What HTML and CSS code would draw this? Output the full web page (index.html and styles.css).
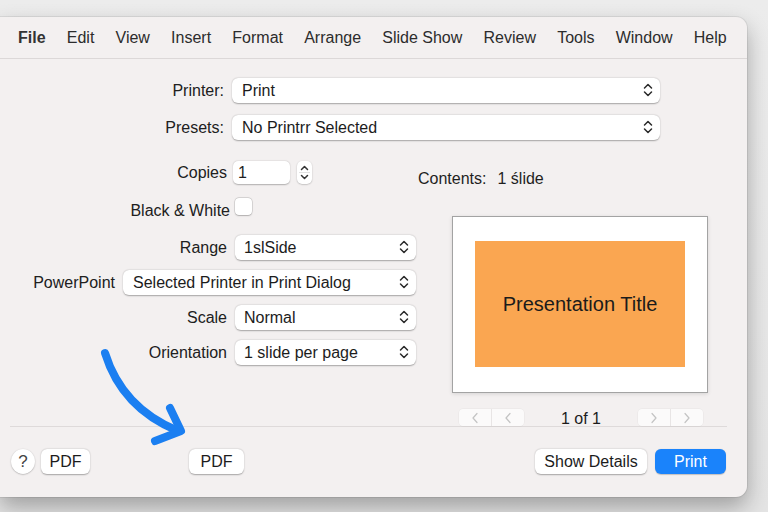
FILE: index.html
```html
<!DOCTYPE html>
<html>
<head>
<meta charset="utf-8">
<link rel="stylesheet" href="styles.css">
</head>
<body>
<div class="desk">
  <div class="win">
    <nav class="menubar">
      <span class="menu bold">File</span>
      <span class="menu">Edit</span>
      <span class="menu">View</span>
      <span class="menu">Insert</span>
      <span class="menu">Format</span>
      <span class="menu">Arrange</span>
      <span class="menu">Slide Show</span>
      <span class="menu">Review</span>
      <span class="menu">Tools</span>
      <span class="menu">Window</span>
      <span class="menu">Help</span>
    </nav>
    <div class="content">
      <div class="row">
        <span class="lbl lbl-top">Printer:</span>
        <div class="select wide">Print
          <svg class="chev" viewBox="0 0 10 16"><path d="M1.5 6 L5 2.5 L8.5 6 M1.5 10 L5 13.5 L8.5 10"/></svg>
        </div>
      </div>
      <div class="row presets">
        <span class="lbl lbl-top">Presets:</span>
        <div class="select wide">No Printrr Selected
          <svg class="chev" viewBox="0 0 10 16"><path d="M1.5 6 L5 2.5 L8.5 6 M1.5 10 L5 13.5 L8.5 10"/></svg>
        </div>
      </div>
      <div class="split">
        <div class="form">
          <div class="row">
            <span class="lbl">Copies</span>
            <div class="field">1</div>
            <div class="stepper">
              <svg viewBox="0 0 15 23"><path class="st" d="M4.5 8.5 L7.5 5.5 L10.5 8.5 M4.5 14.5 L7.5 17.5 L10.5 14.5"/><path class="stl" d="M2 11.5 H13"/></svg>
            </div>
          </div>
          <div class="row bw">
            <span class="lbl lbl-bw">Black &amp; White</span>
            <div class="check"></div>
          </div>
          <div class="row range">
            <span class="lbl">Range</span>
            <div class="select short">1slSide
              <svg class="chev" viewBox="0 0 10 16"><path d="M1.5 6 L5 2.5 L8.5 6 M1.5 10 L5 13.5 L8.5 10"/></svg>
            </div>
          </div>
          <div class="row">
            <span class="lbl lbl-pp">PowerPoint</span>
            <div class="select pp">Selected Printer in Print Dialog
              <svg class="chev" viewBox="0 0 10 16"><path d="M1.5 6 L5 2.5 L8.5 6 M1.5 10 L5 13.5 L8.5 10"/></svg>
            </div>
          </div>
          <div class="row">
            <span class="lbl">Scale</span>
            <div class="select short">Normal
              <svg class="chev" viewBox="0 0 10 16"><path d="M1.5 6 L5 2.5 L8.5 6 M1.5 10 L5 13.5 L8.5 10"/></svg>
            </div>
          </div>
          <div class="row">
            <span class="lbl">Orientation</span>
            <div class="select short">1 slide per page
              <svg class="chev" viewBox="0 0 10 16"><path d="M1.5 6 L5 2.5 L8.5 6 M1.5 10 L5 13.5 L8.5 10"/></svg>
            </div>
          </div>
        </div>
        <div class="side">
          <div class="contents"><span class="ck">Contents:</span><span>1 ślide</span></div>
          <div class="preview">
            <div class="slide">Presentation Title</div>
          </div>
          <div class="pager">
            <div class="navgrp">
              <span class="nb"><svg viewBox="0 0 8 12"><path d="M6 1.5 L2 6 L6 10.5"/></svg></span>
              <span class="nb nb2"><svg viewBox="0 0 8 12"><path d="M6 1.5 L2 6 L6 10.5"/></svg></span>
            </div>
            <span class="pagetxt">1 of 1</span>
            <div class="navgrp">
              <span class="nb"><svg viewBox="0 0 8 12"><path d="M2 1.5 L6 6 L2 10.5"/></svg></span>
              <span class="nb nb2"><svg viewBox="0 0 8 12"><path d="M2 1.5 L6 6 L2 10.5"/></svg></span>
            </div>
          </div>
        </div>
      </div>
      <div class="sep"></div>
      <div class="footer">
        <div class="btn help">?</div>
        <div class="btn pdf">PDF</div>
        <div class="btn pdf2">PDF</div>
        <div class="btn details">Show Details</div>
        <div class="btn print">Print</div>
      </div>
    </div>
  </div>
  <svg class="arrow" viewBox="0 0 768 512">
    <path d="M105 353 Q122 408 178 431"/>
    <path d="M170 408 L181 431 L155 441"/>
  </svg>
</div>
</body>
</html>
```

FILE: styles.css
```css
* { box-sizing: border-box; }
body {
  margin: 0;
  font-family: "Liberation Sans", Arial, sans-serif;
  color: #1f1f1f;
  background: #e6e6e6;
}
.desk {
  position: relative;
  width: 768px;
  height: 512px;
  padding-top: 17px;
  overflow: hidden;
  background: linear-gradient(#ececec, #e4e4e4);
}
.win {
  width: 747px;
  height: 480px;
  background: #f3f0f0;
  border-radius: 0 11px 11px 0;
  box-shadow: 0 10px 22px rgba(0,0,0,.30), 0 0 0 1px rgba(0,0,0,.07);
}
.menubar {
  height: 42px;
  border-bottom: 1px solid #dcd8d8;
  display: flex;
  align-items: center;
  gap: 21.2px;
  padding-left: 18px;
  font-size: 16px;
  color: #2c2c2c;
}
.bold { font-weight: bold; color: #333; }
.content { padding-top: 19px; }
.row { display: flex; align-items: center; gap: 8px; }
.lbl { flex: 0 0 227px; text-align: right; font-size: 16px; color: #202020; }
.lbl-top { flex-basis: 224px; }
.lbl-pp { flex-basis: 115px; }
.presets { margin-top: 12px; }
.select {
  position: relative;
  height: 25px;
  background: #fff;
  border-radius: 6px;
  box-shadow: 0 0.5px 1.5px rgba(0,0,0,.32);
  display: flex;
  align-items: center;
  padding-left: 9px;
  font-size: 16px;
  color: #1c1c1c;
}
.wide { width: 428px; padding-left: 10px; }
.short { width: 181px; }
.pp { width: 293px; padding-left: 10px; }
.chev {
  position: absolute;
  right: 7px;
  top: 4px;
  width: 10px;
  height: 16px;
  fill: none;
  stroke: #2a2a2a;
  stroke-width: 1.5;
  stroke-linecap: round;
  stroke-linejoin: round;
}
.split { display: flex; margin-top: 20px; }
.form { width: 416px; display: flex; flex-direction: column; gap: 10px; }
.form .row { height: 25px; }
.field {
  width: 57px;
  height: 23px;
  margin-left: -2px;
  background: #fff;
  border-radius: 5px;
  box-shadow: 0 0.5px 1.5px rgba(0,0,0,.28);
  font-size: 16px;
  padding-left: 5px;
  display: flex;
  align-items: center;
}
.stepper {
  width: 15px;
  height: 23px;
  margin-left: -1px;
  background: #fff;
  border-radius: 5px;
  box-shadow: 0 0.5px 1.5px rgba(0,0,0,.3);
}
.stepper svg { display: block; width: 15px; height: 23px; }
.st { fill: none; stroke: #333; stroke-width: 1.5; stroke-linecap: round; stroke-linejoin: round; }
.stl { stroke: #e2e2e2; stroke-width: 1; }
.bw { margin-top: 1px; }
.lbl-bw { flex-basis: 230px; padding-top: 5px; }
.bw.row { gap: 5px; }
.check {
  width: 17px;
  height: 17px;
  margin-top: -4px;
  background: #fff;
  border-radius: 4px;
  box-shadow: 0 0 0 0.5px rgba(0,0,0,.18), 0 0.5px 1.5px rgba(0,0,0,.2);
}
.range { margin-top: 4px; }
.side { margin-left: 2px; }
.contents {
  margin-top: 9px;
  height: 20px;
  line-height: 20px;
  font-size: 16px;
  display: flex;
}
.ck { margin-right: 11px; }
.preview {
  margin: 27px 0 0 34px;
  width: 256px;
  height: 177px;
  background: #fff;
  border: 1px solid #a3a3a3;
  padding: 24px 22px;
  box-shadow: 0 1px 4px rgba(0,0,0,.12);
}
.slide {
  width: 210px;
  height: 126px;
  background: #faa651;
  display: flex;
  align-items: center;
  justify-content: center;
  font-size: 20px;
  color: #1b1b1b;
}
.pager {
  margin: 16px 0 0 41px;
  width: 244px;
  height: 17px;
  display: flex;
  justify-content: space-between;
  align-items: center;
}
.pagetxt { font-size: 16px; color: #1c1c1c; margin-top: 3px; }
.navgrp {
  display: flex;
  width: 65px;
  height: 17px;
  background: #fbfafa;
  border-radius: 4px;
  box-shadow: 0 0 0 0.5px rgba(0,0,0,.05);
}
.nb {
  flex: 1;
  display: flex;
  align-items: center;
  justify-content: center;
}
.nb2 { border-left: 1px solid #e8e5e5; }
.nb svg {
  width: 8px;
  height: 12px;
  fill: none;
  stroke: #c3c3c3;
  stroke-width: 1.2;
  stroke-linecap: round;
  stroke-linejoin: round;
}
.sep { height: 1px; background: #dedada; margin: 0 20px 0 10px; }
.footer {
  display: flex;
  align-items: center;
  padding: 22px 21px 0 11px;
}
.btn {
  height: 25px;
  background: #fff;
  border-radius: 6px;
  box-shadow: 0 0.5px 1.5px rgba(0,0,0,.32);
  font-size: 16px;
  color: #1c1c1c;
  display: flex;
  align-items: center;
  justify-content: center;
}
.help { width: 24px; border-radius: 50%; color: #444; font-size: 17px; }
.pdf { width: 49px; margin-left: 6px; }
.pdf2 { width: 55px; margin-left: 99px; }
.details { width: 112px; margin-left: auto; }
.print { width: 71px; margin-left: 8px; background: #1a83fb; color: #fff; box-shadow: 0 0.5px 1px rgba(0,0,0,.2); }
.arrow {
  position: absolute;
  left: 0;
  top: 0;
  width: 768px;
  height: 512px;
  fill: none;
  stroke: #1b7ff1;
  stroke-width: 8;
  stroke-linecap: round;
  stroke-linejoin: round;
  pointer-events: none;
}
```
